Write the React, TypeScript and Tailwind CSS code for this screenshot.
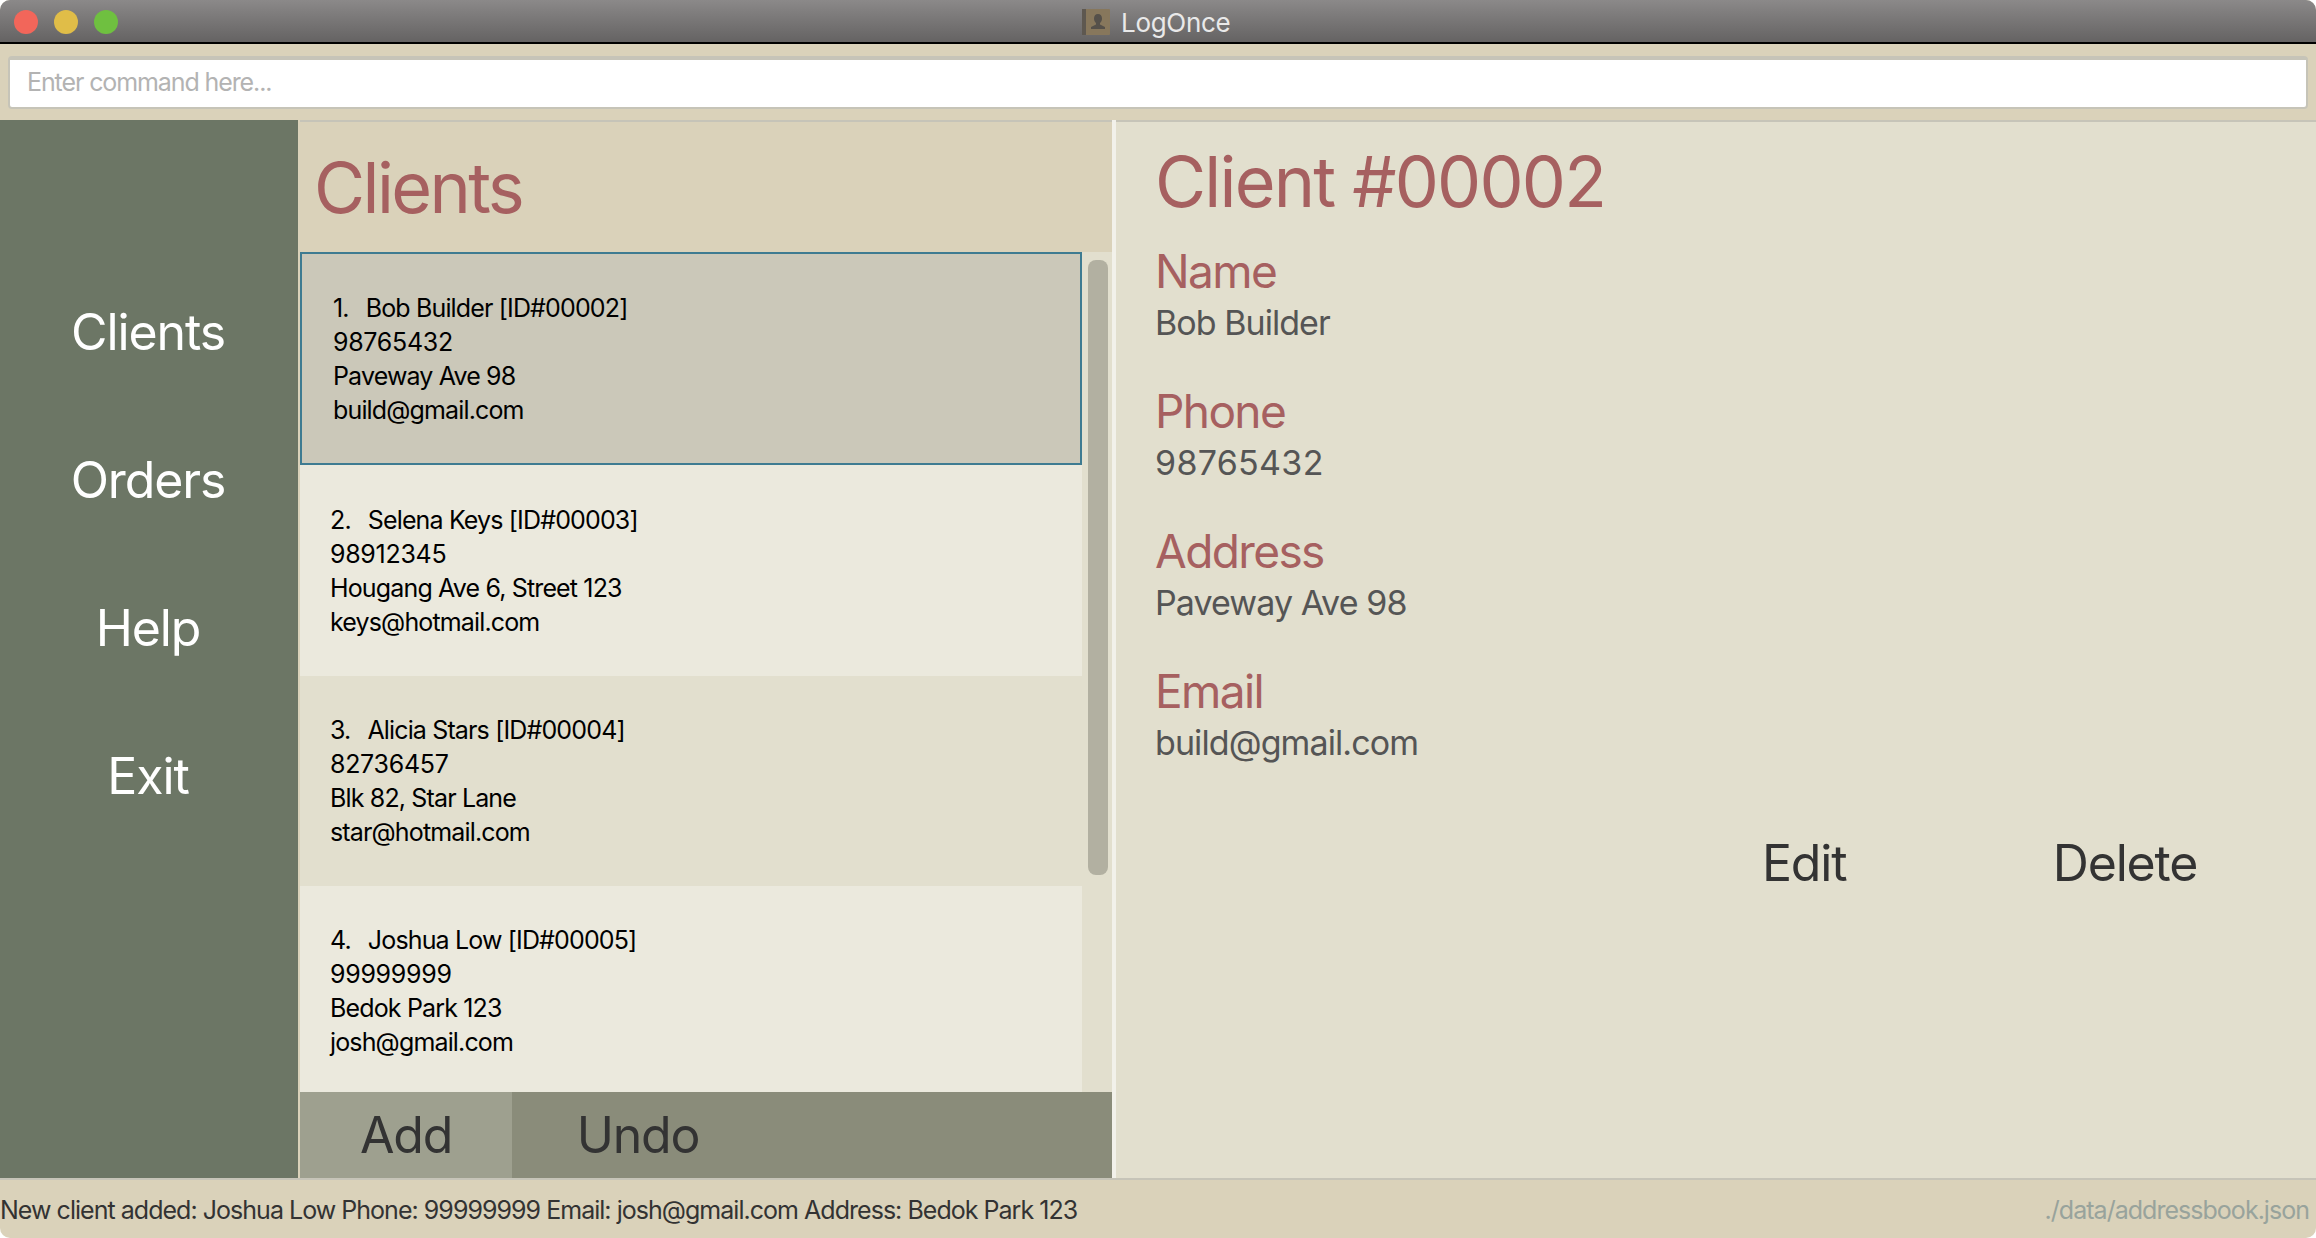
const clients = [
  { no: 1, name: "Bob Builder", id: "00002", phone: "98765432", address: "Paveway Ave 98", email: "build@gmail.com" },
  { no: 2, name: "Selena Keys", id: "00003", phone: "98912345", address: "Hougang Ave 6, Street 123", email: "keys@hotmail.com" },
  { no: 3, name: "Alicia Stars", id: "00004", phone: "82736457", address: "Blk 82, Star Lane", email: "star@hotmail.com" },
  { no: 4, name: "Joshua Low", id: "00005", phone: "99999999", address: "Bedok Park 123", email: "josh@gmail.com" },
];

const fields = [
  { label: "Name", value: "Bob Builder", spacing: "tracking-[-0.95px]" },
  { label: "Phone", value: "98765432", spacing: "tracking-[0.3px]" },
  { label: "Address", value: "Paveway Ave 98", spacing: "tracking-[-0.9px]" },
  { label: "Email", value: "build@gmail.com", spacing: "tracking-[-0.9px]" },
];

const rowStyles = [
  "h-[213px] pl-[31px] bg-[#cbc8b9] border-2 border-[#3e7b91]",
  "h-[211px] pl-[30px] bg-[#ebe9dd]",
  "h-[210px] pl-[30px] bg-[#e2dfce]",
  "h-[210px] pl-[30px] bg-[#ebe9dd]",
];

function AppIcon() {
  return (
    <svg width="28" height="26" viewBox="0 0 28 26" className="mr-[11px]">
      <rect x="0" y="0" width="28" height="26" rx="1" fill="#87775c" />
      <rect x="0" y="0" width="4" height="26" fill="#5e5850" />
      <path d="M16 5c2.600 0 4 2 4 4.500 0 2-1 3.500-2 4.500v1.500l5 2.500v2H9v-2l5-2.500V14c-1-1-2-2.500-2-4.500C12 7 13.400 5 16 5z" fill="#55504a" />
    </svg>
  );
}

export default function App() {
  return (
    <div className="flex h-[1238px] w-[2316px] flex-col overflow-hidden rounded-[10px] bg-[#dad2ba] font-['Inter',sans-serif]">
      <div className="flex h-[44px] shrink-0 items-center border-b-2 border-black bg-gradient-to-b from-[#8b8989] to-[#656363] px-[14px] pt-[2px]">
        <div className="flex gap-[16px]">
          <div className="size-[24px] rounded-full bg-[#f2665a]" />
          <div className="size-[24px] rounded-full bg-[#e0bd48]" />
          <div className="size-[24px] rounded-full bg-[#6fc040]" />
        </div>
        <div className="ml-[964px] flex items-center">
          <AppIcon />
          <span className="text-[26px] tracking-[-0.3px] text-[#e9e9e9]">LogOnce</span>
        </div>
      </div>

      <div className="flex h-[76px] shrink-0 items-center px-[8px]">
        <div className="flex h-[53px] w-[2301px] items-center rounded-[4px] border-2 border-t-4 border-[#c6c4b8] bg-white px-[17px] text-[25px] tracking-[-1.1px] text-[#b3b3b3]">
          Enter command here...
        </div>
      </div>

      <div className="flex min-h-0 flex-1">
        <nav className="flex w-[298px] shrink-0 flex-col bg-[#6c7665] pt-[138px] pr-[2px] text-center text-[50px] tracking-[-1.1px] text-white">
          <div className="flex h-[148px] items-center justify-center">Clients</div>
          <div className="flex h-[148px] items-center justify-center">Orders</div>
          <div className="flex h-[148px] items-center justify-center">Help</div>
          <div className="flex h-[148px] items-center justify-center">Exit</div>
        </nav>

        <section className="ml-[2px] flex w-[812px] shrink-0 flex-col border-t-2 border-[#c6c4b8]">
          <h1 className="flex h-[130px] shrink-0 items-center pl-[14px] text-[70px] font-normal tracking-[-2.6px] text-[#a66060]">
            Clients
          </h1>
          <div className="flex min-h-0 flex-1 bg-[#e2dfce]">
            <div className="flex w-[782px] shrink-0 flex-col overflow-hidden">
              {clients.map((c, i) => (
                <div key={c.id} className={`flex shrink-0 flex-col justify-center text-[25px] leading-[34px] tracking-[-0.85px] text-black ${rowStyles[i]}`}>
                  <div>
                    <span className="mr-[17px]">{c.no}.</span>
                    {c.name} [ID#{c.id}]
                  </div>
                  <div className="tracking-[-0.3px]">{c.phone}</div>
                  <div>{c.address}</div>
                  <div>{c.email}</div>
                </div>
              ))}
            </div>
            <div className="ml-[6px] pt-[8px]">
              <div className="h-[615px] w-[20px] rounded-[8px] bg-[#b2b0a1]" />
            </div>
          </div>
          <div className="flex h-[86px] shrink-0 bg-[#8a8c7a] text-[50px] tracking-[-1.2px] text-[#333333]">
            <div className="flex w-[212px] items-center justify-center bg-[#9ea08f]">Add</div>
            <div className="flex w-[252px] items-center justify-center">Undo</div>
          </div>
        </section>

        <div className="w-[4px] shrink-0 bg-[#f2f1ea]" />

        <main className="flex min-w-0 flex-1 flex-col border-t-2 border-[#c6c4b8] bg-[#e2dfce] pl-[39px]">
          <h2 className="mt-[20px] text-[70px] leading-[80px] font-normal tracking-[-1.8px] text-[#a66060]">
            Client #00002
          </h2>
          <div className="mt-[21px] flex flex-col gap-[37px]">
            {fields.map((f) => (
              <div key={f.label} className="flex flex-col">
                <div className="text-[46px] leading-[56px] tracking-[-1.6px] text-[#a66060]">{f.label}</div>
                <div className={`text-[34px] leading-[47px] text-[#555555] ${f.spacing}`}>{f.value}</div>
              </div>
            ))}
          </div>
          <div className="mt-[67px] flex text-[50px] leading-[60px] tracking-[-1.2px] text-[#333333]">
            <div className="ml-[607px] w-[84px] text-center">Edit</div>
            <div className="ml-[206px] w-[146px] text-center">Delete</div>
          </div>
        </main>
      </div>

      <footer className="flex h-[60px] shrink-0 items-center justify-between border-t-2 border-[#c6c4b8] pt-[3px] pr-[7px] text-[25px] tracking-[-0.97px]">
        <span className="text-[#333333]">New client added: Joshua Low Phone: 99999999 Email: josh@gmail.com Address: Bedok Park 123</span>
        <span className="text-[#98a39c]">./data/addressbook.json</span>
      </footer>
    </div>
  );
}
